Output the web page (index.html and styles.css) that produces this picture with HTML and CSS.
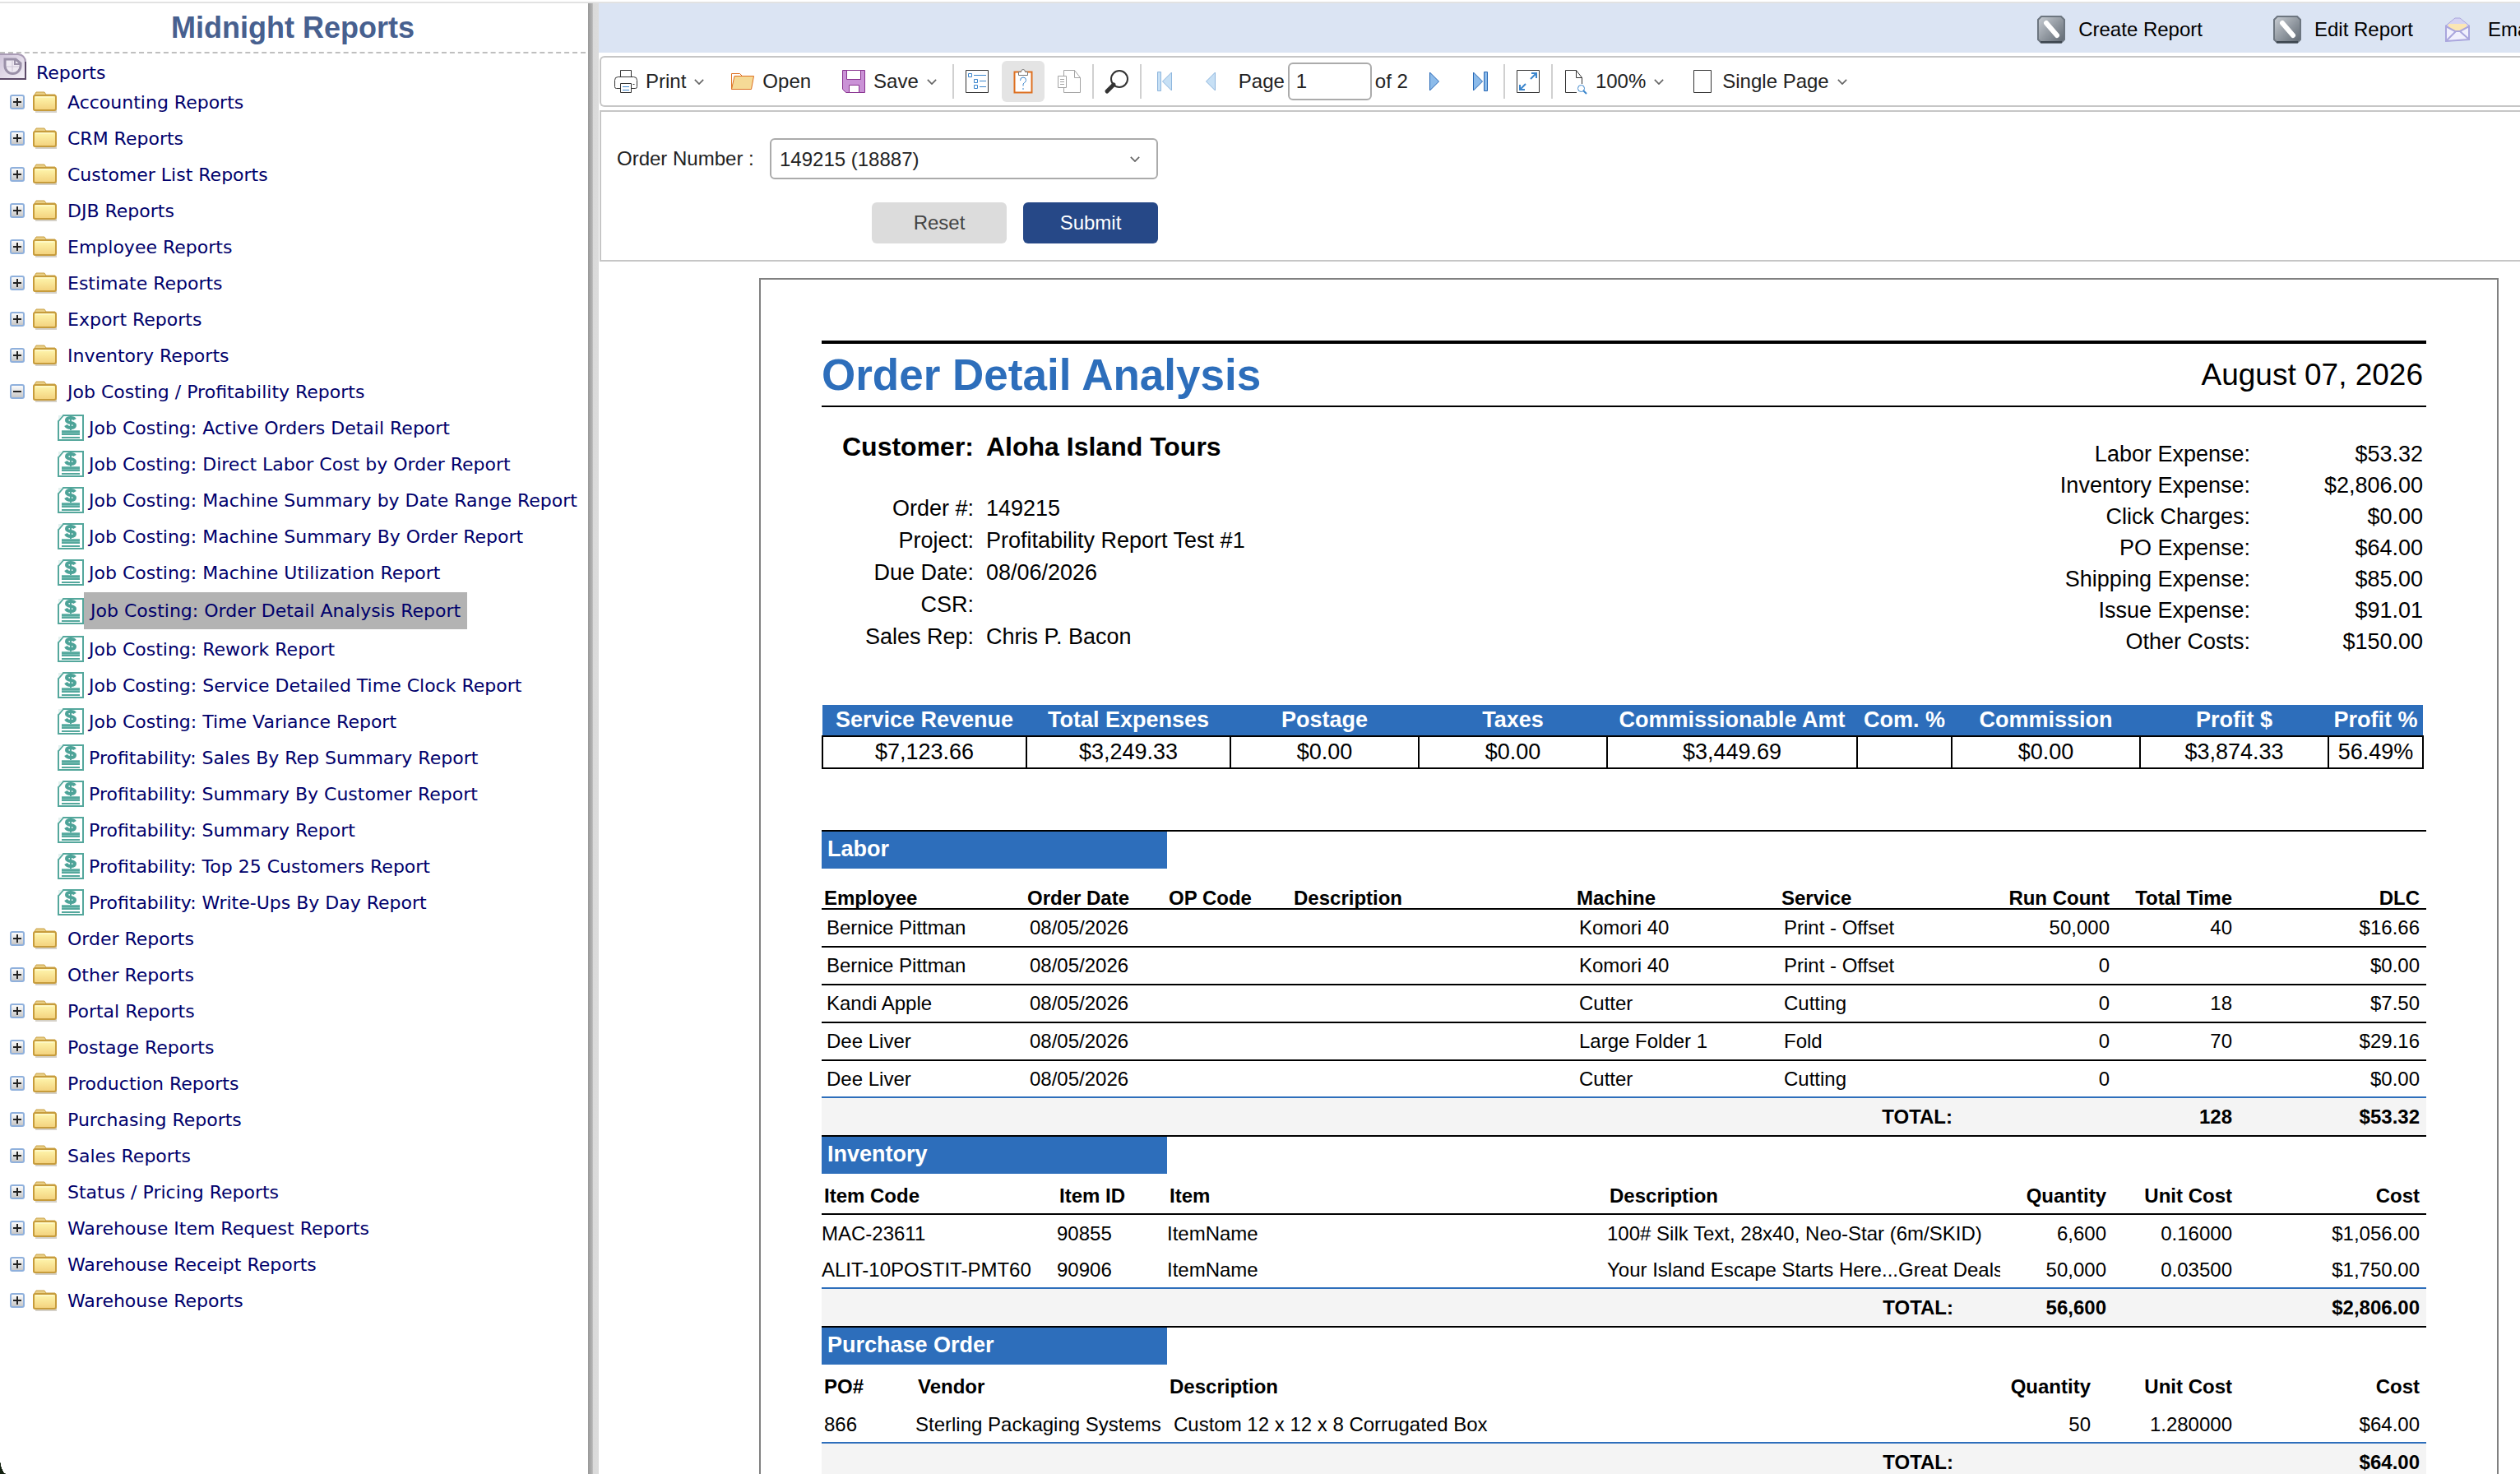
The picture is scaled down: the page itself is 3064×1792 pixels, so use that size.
FILE: index.html
```html
<!DOCTYPE html>
<html lang="en">

<head>
    <meta charset="UTF-8">
    <meta name="viewport" content="width=device-width, initial-scale=1.0">
    <title>Midnight Reports</title>
    <link rel="stylesheet" href="styles.css">
</head>

<body>
    <!-- shared icons -->
    <svg class="sprite" aria-hidden="true">
        <defs>
            <linearGradient id="folderFill" x1="0" y1="0" x2="0" y2="1">
                <stop offset="0" stop-color="#fff8b0" />
                <stop offset="1" stop-color="#f3d17c" />
            </linearGradient>
            <linearGradient id="boxFill" x1="0" y1="0" x2="0" y2="1">
                <stop offset="0" stop-color="#ffffff" />
                <stop offset="1" stop-color="#c4c4c4" />
            </linearGradient>
            <linearGradient id="steel" x1="0" y1="0" x2="1" y2="1">
                <stop offset="0" stop-color="#c9ced4" />
                <stop offset="1" stop-color="#5d6670" />
            </linearGradient>
            <linearGradient id="lilac" x1="0" y1="0" x2="1" y2="1">
                <stop offset="0" stop-color="#cfc4da" />
                <stop offset="1" stop-color="#f4f0f7" />
            </linearGradient>
        </defs>
        <symbol id="plus" viewBox="0 0 18 18">
            <rect x="1" y="1" width="16" height="16" rx="2" fill="url(#boxFill)" stroke="#8fb0dc" stroke-width="2" />
            <path d="M4 9h10M9 4v10" stroke="#222" stroke-width="2" />
        </symbol>
        <symbol id="minus" viewBox="0 0 18 18">
            <rect x="1" y="1" width="16" height="16" rx="2" fill="url(#boxFill)" stroke="#8fb0dc" stroke-width="2" />
            <path d="M4 9h10" stroke="#222" stroke-width="2" />
        </symbol>
        <symbol id="folder" viewBox="0 0 30 28">
            <path d="M3 26h25V7" fill="none" stroke="#b9b2a4" stroke-width="2" opacity=".6" />
            <path d="M1 7l3-5h10l2 3h11v19H1z" fill="#e9cf86" stroke="#c9a145" stroke-width="1" />
            <rect x="1" y="6" width="27" height="18" rx="2" fill="url(#folderFill)" stroke="#c79c3c" stroke-width="2" />
            <path d="M3 8h22" stroke="#fffde0" stroke-width="1" />
        </symbol>
        <symbol id="invoice" viewBox="0 0 32 32">
            <path d="M7 1h24v30H1V8z" fill="#fff" stroke="#54a79c" stroke-width="2" />
            <path d="M1 1h5L1 7z" fill="#e2f1ef" />
            <path d="M21 6c-1-2-3-2-5-2-3 0-5 1-5 3 0 4 10 2 10 6 0 2-2 3-5 3s-5-1-6-3" fill="none" stroke="#4da398" stroke-width="4" />
            <path d="M16 1v18" stroke="#4da398" stroke-width="2" />
            <path d="M5 19h22v5H5z" fill="#7dc0b7" />
            <path d="M5 21h22M5 24h22M5 28h22" stroke="#55a89d" stroke-width="2" />
        </symbol>
        <symbol id="edit" viewBox="0 0 34 34">
            <path d="M5 1h24l4 4v24l-4 4H5l-4-4V5z" fill="url(#steel)" stroke="#6d7680" stroke-width="2" />
            <path d="M11 9l13 15" stroke="#fff" stroke-width="6" stroke-linecap="round" />
            <path d="M4 32h26" stroke="#3d464f" stroke-width="2" />
        </symbol>
        <symbol id="down" viewBox="0 0 14 8">
            <path d="M1 1l6 6 6-6" fill="none" stroke="#666" stroke-width="2" />
        </symbol>
    </svg>

    <div class="app">
        <aside class="sidebar">
            <h1>Midnight Reports</h1>
            <nav class="tree">
                <a class="root" href="#">
                    <svg width="32" height="32" viewBox="0 0 32 32">
                        <path d="M0 1h22q9 1 9 10v20H0" fill="url(#lilac)" stroke="#a99bb5" stroke-width="2" />
                        <path d="M0 31h31V10" fill="none" stroke="#5c4a68" stroke-width="2" />
                        <path d="M6 7v8a9 9 0 0 0 19 0v-3l-6-5z" fill="#efeaf3" stroke="#9a90a8" stroke-width="3" />
                        <path d="M18 7v6h7" fill="none" stroke="#9a90a8" stroke-width="2" />
                        <path d="M15 9v13M8 16h15" stroke="#cdc4d6" stroke-width="1" />
                    </svg>
                    <span>Reports</span>
                </a>
                <ul>
                    <li><a href="#"><svg class="box"><use href="#plus" /></svg><svg class="folder"><use href="#folder" /></svg>Accounting Reports</a></li>
                    <li><a href="#"><svg class="box"><use href="#plus" /></svg><svg class="folder"><use href="#folder" /></svg>CRM Reports</a></li>
                    <li><a href="#"><svg class="box"><use href="#plus" /></svg><svg class="folder"><use href="#folder" /></svg>Customer List Reports</a></li>
                    <li><a href="#"><svg class="box"><use href="#plus" /></svg><svg class="folder"><use href="#folder" /></svg>DJB Reports</a></li>
                    <li><a href="#"><svg class="box"><use href="#plus" /></svg><svg class="folder"><use href="#folder" /></svg>Employee Reports</a></li>
                    <li><a href="#"><svg class="box"><use href="#plus" /></svg><svg class="folder"><use href="#folder" /></svg>Estimate Reports</a></li>
                    <li><a href="#"><svg class="box"><use href="#plus" /></svg><svg class="folder"><use href="#folder" /></svg>Export Reports</a></li>
                    <li><a href="#"><svg class="box"><use href="#plus" /></svg><svg class="folder"><use href="#folder" /></svg>Inventory Reports</a></li>
                    <li>
                        <a href="#"><svg class="box"><use href="#minus" /></svg><svg class="folder"><use href="#folder" /></svg>Job Costing / Profitability Reports</a>
                        <ul class="children">
                            <li><a href="#"><svg><use href="#invoice" /></svg><span>Job Costing: Active Orders Detail Report</span></a></li>
                            <li><a href="#"><svg><use href="#invoice" /></svg><span>Job Costing: Direct Labor Cost by Order Report</span></a></li>
                            <li><a href="#"><svg><use href="#invoice" /></svg><span>Job Costing: Machine Summary by Date Range Report</span></a></li>
                            <li><a href="#"><svg><use href="#invoice" /></svg><span>Job Costing: Machine Summary By Order Report</span></a></li>
                            <li><a href="#"><svg><use href="#invoice" /></svg><span>Job Costing: Machine Utilization Report</span></a></li>
                            <li><a href="#" class="selected"><svg><use href="#invoice" /></svg><span>Job Costing: Order Detail Analysis Report</span></a></li>
                            <li><a href="#"><svg><use href="#invoice" /></svg><span>Job Costing: Rework Report</span></a></li>
                            <li><a href="#"><svg><use href="#invoice" /></svg><span>Job Costing: Service Detailed Time Clock Report</span></a></li>
                            <li><a href="#"><svg><use href="#invoice" /></svg><span>Job Costing: Time Variance Report</span></a></li>
                            <li><a href="#"><svg><use href="#invoice" /></svg><span>Profitability: Sales By Rep Summary Report</span></a></li>
                            <li><a href="#"><svg><use href="#invoice" /></svg><span>Profitability: Summary By Customer Report</span></a></li>
                            <li><a href="#"><svg><use href="#invoice" /></svg><span>Profitability: Summary Report</span></a></li>
                            <li><a href="#"><svg><use href="#invoice" /></svg><span>Profitability: Top 25 Customers Report</span></a></li>
                            <li><a href="#"><svg><use href="#invoice" /></svg><span>Profitability: Write-Ups By Day Report</span></a></li>
                        </ul>
                    </li>
                    <li><a href="#"><svg class="box"><use href="#plus" /></svg><svg class="folder"><use href="#folder" /></svg>Order Reports</a></li>
                    <li><a href="#"><svg class="box"><use href="#plus" /></svg><svg class="folder"><use href="#folder" /></svg>Other Reports</a></li>
                    <li><a href="#"><svg class="box"><use href="#plus" /></svg><svg class="folder"><use href="#folder" /></svg>Portal Reports</a></li>
                    <li><a href="#"><svg class="box"><use href="#plus" /></svg><svg class="folder"><use href="#folder" /></svg>Postage Reports</a></li>
                    <li><a href="#"><svg class="box"><use href="#plus" /></svg><svg class="folder"><use href="#folder" /></svg>Production Reports</a></li>
                    <li><a href="#"><svg class="box"><use href="#plus" /></svg><svg class="folder"><use href="#folder" /></svg>Purchasing Reports</a></li>
                    <li><a href="#"><svg class="box"><use href="#plus" /></svg><svg class="folder"><use href="#folder" /></svg>Sales Reports</a></li>
                    <li><a href="#"><svg class="box"><use href="#plus" /></svg><svg class="folder"><use href="#folder" /></svg>Status / Pricing Reports</a></li>
                    <li><a href="#"><svg class="box"><use href="#plus" /></svg><svg class="folder"><use href="#folder" /></svg>Warehouse Item Request Reports</a></li>
                    <li><a href="#"><svg class="box"><use href="#plus" /></svg><svg class="folder"><use href="#folder" /></svg>Warehouse Receipt Reports</a></li>
                    <li><a href="#"><svg class="box"><use href="#plus" /></svg><svg class="folder"><use href="#folder" /></svg>Warehouse Reports</a></li>
                </ul>
            </nav>
        </aside>
        <div class="splitter"></div>

        <main class="main">
            <header class="actions">
                <a class="create" href="#"><svg width="34" height="34"><use href="#edit" /></svg>Create Report</a>
                <a class="edit" href="#"><svg width="34" height="34"><use href="#edit" /></svg>Edit Report</a>
                <a class="email" href="#">
                    <svg width="30" height="30" viewBox="0 0 30 30">
                        <path d="M1 10L12 1h6l11 9v17L1 29z" fill="#d5d3f3" stroke="#aaa6dd" stroke-width="1" />
                        <path d="M4 8h22v7l-7 4h-8l-7-4z" fill="#fbe6b4" />
                        <path d="M1 11l11 6h6l11-6v16L1 29z" fill="#f1f0fd" stroke="#aaa6dd" stroke-width="2" />
                        <path d="M2 28l11-11h5l10 9" fill="none" stroke="#aaa6dd" stroke-width="2" />
                    </svg>
                    Email
                </a>
            </header>

            <div class="toolbar">
                <button class="tool" type="button">
                    <svg width="28" height="28" viewBox="0 0 28 28" fill="none" stroke="#333" stroke-width="1">
                        <path d="M7.500 8.500v-8h13v8M7.500 22.500h-5q-2 0-2-2v-8q0-4 4-4h19q4 0 4 4v8q0 2-2 2h-5" />
                        <path d="M7.500 16.500h13v11h-13z" fill="#fff" />
                        <path d="M10 20.500h8M10 24.500h8" stroke="#3c86cd" />
                        <path d="M23.500 17v1" stroke-width="2" />
                    </svg>
                    Print
                    <svg class="down"><use href="#down" /></svg>
                </button>
                <button class="tool open" type="button">
                    <svg width="28" height="28" viewBox="0 0 28 28" stroke="#dd7021" stroke-width="1">
                        <path d="M.5 23.500v-19h10l3 3h11v3" fill="#fff" />
                        <path d="M4 7.500h23.500l-3 16H.5z" fill="#f5da96" />
                    </svg>
                    Open
                </button>
                <button class="tool" type="button">
                    <svg width="28" height="28" viewBox="0 0 28 28" stroke="#88328f" stroke-width="1">
                        <path d="M.5.5h27v27h-23l-4-4z" fill="#ca92d6" />
                        <path d="M5.500.5h17v11h-17zM8.500 18.500h12v9h-12z" fill="#fff" />
                    </svg>
                    Save
                    <svg class="down"><use href="#down" /></svg>
                </button>
                <span class="sep"></span>
                <button class="tool" type="button" aria-label="Bookmarks">
                    <svg width="28" height="28" viewBox="0 0 28 28" fill="none" stroke="#3c86cd">
                        <path d="M.5.5h27v27H.5z" fill="#fff" stroke="#333" />
                        <path d="M3.500 4.500h4v4h-4zM10.500 11.500h4v4h-4zM10.500 18.500h4v4h-4zM10 6.500h15M17 13.500h8M17 20.500h8" />
                    </svg>
                </button>
                <button class="tool active" type="button" aria-label="Parameters">
                    <svg width="28" height="28" viewBox="0 0 28 28">
                        <path d="M3.500 2.500h21v25h-21z" fill="#fff" stroke="#dd7021" stroke-width="2" />
                        <path d="M8.500 6.500v-4h3q0-3 2.500-3t2.500 3h3v4z" fill="#fff" stroke="#777" />
                        <path d="M10.500 13q0-4 3.500-4t3.500 3.500q0 2-2 3t-1.500 4M14 22v2" fill="none" stroke="#3c86cd" />
                    </svg>
                </button>
                <button class="tool" type="button" aria-label="Copy">
                    <svg width="28" height="28" viewBox="0 0 28 28" fill="none" stroke="#a3a3a3">
                        <path d="M7.500 7V.5h13l7 9v18h-20v-6M20.500.5v9h7" />
                        <path d="M.5 7.500h10v14H.5z" fill="#fff" />
                        <path d="M3 11.500h5M3 14.500h5M3 17.500h5" />
                    </svg>
                </button>
                <span class="sep"></span>
                <button class="tool" type="button" aria-label="Find">
                    <svg width="28" height="28" viewBox="0 0 28 28" fill="none" stroke="#333">
                        <circle cx="17" cy="11" r="10" stroke-width="2" />
                        <path d="M10 18l-8 8" stroke-width="5" stroke-linecap="round" />
                    </svg>
                </button>
                <span class="sep"></span>
                <button class="tool" type="button" aria-label="First page">
                    <svg width="28" height="28" viewBox="0 0 28 28" fill="#c7e0f5" stroke="#8db5dd">
                        <path d="M5.500 2.500h4v23h-4zM22.500 3v22l-11-11z" />
                    </svg>
                </button>
                <button class="tool" type="button" aria-label="Previous page">
                    <svg width="28" height="28" viewBox="0 0 28 28" fill="#c7e0f5" stroke="#8db5dd">
                        <path d="M19.500 3v22l-11-11z" />
                    </svg>
                </button>
                <label class="page-label" for="page">Page</label>
                <input id="page" class="page-input" type="text" value="1">
                <span class="page-count">of 2</span>
                <button class="tool" type="button" aria-label="Next page">
                    <svg width="28" height="28" viewBox="0 0 28 28" fill="#8cbbea" stroke="#2566b4">
                        <path d="M8.500 3v22l11-11z" />
                    </svg>
                </button>
                <button class="tool" type="button" aria-label="Last page">
                    <svg width="28" height="28" viewBox="0 0 28 28" fill="#8cbbea" stroke="#2566b4">
                        <path d="M18.500 2.500h4v23h-4zM5.500 3v22l11-11z" />
                    </svg>
                </button>
                <span class="sep"></span>
                <button class="tool" type="button" aria-label="Full screen">
                    <svg width="28" height="28" viewBox="0 0 28 28" fill="none" stroke="#3c86cd" stroke-width="2">
                        <path d="M.5.5h27v27H.5z" fill="#fff" stroke="#333" stroke-width="1" />
                        <path d="M17 11l7-7M18 4h6v6M11 17l-7 7M4 18v6h6" />
                    </svg>
                </button>
                <span class="sep"></span>
                <button class="tool" type="button">
                    <svg width="28" height="28" viewBox="0 0 28 28" fill="none" stroke="#333">
                        <path d="M15 27.500H1.500V.5h13l7 9V17M14.500.5v9h7" />
                        <circle cx="20.500" cy="22.500" r="4" stroke="#3c86cd" />
                        <path d="M23 25l4 4" stroke="#3c86cd" stroke-width="2" />
                    </svg>
                    100%
                    <svg class="down"><use href="#down" /></svg>
                </button>
                <button class="tool" type="button">
                    <svg width="28" height="28" viewBox="0 0 28 28" fill="#fff" stroke="#333">
                        <path d="M3.500.5h21v27h-21z" />
                    </svg>
                    Single Page
                    <svg class="down"><use href="#down" /></svg>
                </button>
            </div>

            <form class="params">
                <div class="field">
                    <label for="order">Order Number :</label>
                    <div class="select">
                        <select id="order">
                            <option>149215 (18887)</option>
                        </select>
                        <svg class="down"><use href="#down" /></svg>
                    </div>
                </div>
                <div class="buttons">
                    <button class="btn" type="reset">Reset</button>
                    <button class="btn primary" type="button">Submit</button>
                </div>
            </form>

            <article class="sheet">
                <div class="title">
                    <h2>Order Detail Analysis</h2>
                    <span>August 07, 2026</span>
                </div>

                <div class="info">
                    <dl class="customer">
                        <dt class="big">Customer:</dt>
                        <dd class="big">Aloha Island Tours</dd>
                        <dt>Order #:</dt>
                        <dd>149215</dd>
                        <dt>Project:</dt>
                        <dd>Profitability Report Test #1</dd>
                        <dt>Due Date:</dt>
                        <dd>08/06/2026</dd>
                        <dt>CSR:</dt>
                        <dd></dd>
                        <dt>Sales Rep:</dt>
                        <dd>Chris P. Bacon</dd>
                    </dl>
                    <dl class="expenses">
                        <dt>Labor Expense:</dt>
                        <dd>$53.32</dd>
                        <dt>Inventory Expense:</dt>
                        <dd>$2,806.00</dd>
                        <dt>Click Charges:</dt>
                        <dd>$0.00</dd>
                        <dt>PO Expense:</dt>
                        <dd>$64.00</dd>
                        <dt>Shipping Expense:</dt>
                        <dd>$85.00</dd>
                        <dt>Issue Expense:</dt>
                        <dd>$91.01</dd>
                        <dt>Other Costs:</dt>
                        <dd>$150.00</dd>
                    </dl>
                </div>

                <table class="summary">
                    <colgroup>
                        <col class="w-248"><col class="w-248"><col class="w-229"><col class="w-229"><col>
                        <col class="w-115"><col class="w-229"><col class="w-229"><col class="w-115">
                    </colgroup>
                    <thead>
                        <tr>
                            <th>Service Revenue</th>
                            <th>Total Expenses</th>
                            <th>Postage</th>
                            <th>Taxes</th>
                            <th>Commissionable Amt</th>
                            <th>Com. %</th>
                            <th>Commission</th>
                            <th>Profit $</th>
                            <th>Profit %</th>
                        </tr>
                    </thead>
                    <tbody>
                        <tr>
                            <td>$7,123.66</td>
                            <td>$3,249.33</td>
                            <td>$0.00</td>
                            <td>$0.00</td>
                            <td>$3,449.69</td>
                            <td></td>
                            <td>$0.00</td>
                            <td>$3,874.33</td>
                            <td>56.49%</td>
                        </tr>
                    </tbody>
                </table>

                <section class="group">
                    <h3>Labor</h3>
                    <table class="lines labor">
                        <colgroup>
                            <col class="w-247"><col class="w-172"><col class="w-152"><col><col class="w-249">
                            <col class="w-214"><col class="w-191"><col class="w-149"><col class="w-233">
                        </colgroup>
                        <thead>
                            <tr>
                                <th>Employee</th>
                                <th>Order Date</th>
                                <th>OP Code</th>
                                <th>Description</th>
                                <th>Machine</th>
                                <th>Service</th>
                                <th class="num">Run Count</th>
                                <th class="num">Total Time</th>
                                <th class="num">DLC</th>
                            </tr>
                        </thead>
                        <tbody>
                            <tr><td>Bernice Pittman</td><td>08/05/2026</td><td></td><td></td><td>Komori 40</td><td>Print - Offset</td><td class="num">50,000</td><td class="num">40</td><td class="num">$16.66</td></tr>
                            <tr><td>Bernice Pittman</td><td>08/05/2026</td><td></td><td></td><td>Komori 40</td><td>Print - Offset</td><td class="num">0</td><td></td><td class="num">$0.00</td></tr>
                            <tr><td>Kandi Apple</td><td>08/05/2026</td><td></td><td></td><td>Cutter</td><td>Cutting</td><td class="num">0</td><td class="num">18</td><td class="num">$7.50</td></tr>
                            <tr><td>Dee Liver</td><td>08/05/2026</td><td></td><td></td><td>Large Folder 1</td><td>Fold</td><td class="num">0</td><td class="num">70</td><td class="num">$29.16</td></tr>
                            <tr><td>Dee Liver</td><td>08/05/2026</td><td></td><td></td><td>Cutter</td><td>Cutting</td><td class="num">0</td><td></td><td class="num">$0.00</td></tr>
                        </tbody>
                        <tfoot>
                            <tr><td class="num" colspan="6">TOTAL:</td><td></td><td class="num">128</td><td class="num">$53.32</td></tr>
                        </tfoot>
                    </table>
                </section>

                <section class="group">
                    <h3>Inventory</h3>
                    <table class="lines inventory">
                        <colgroup>
                            <col class="w-286"><col class="w-134"><col><col class="w-424"><col class="w-54">
                            <col class="w-132"><col class="w-153"><col class="w-233">
                        </colgroup>
                        <thead>
                            <tr>
                                <th>Item Code</th>
                                <th>Item ID</th>
                                <th>Item</th>
                                <th colspan="2">Description</th>
                                <th class="num">Quantity</th>
                                <th class="num">Unit Cost</th>
                                <th class="num">Cost</th>
                            </tr>
                        </thead>
                        <tbody>
                            <tr><td>MAC-23611</td><td>90855</td><td>ItemName</td><td colspan="2">100# Silk Text, 28x40, Neo-Star (6m/SKID)</td><td class="num">6,600</td><td class="num">0.16000</td><td class="num">$1,056.00</td></tr>
                            <tr><td>ALIT-10POSTIT-PMT60</td><td>90906</td><td>ItemName</td><td colspan="2">Your Island Escape Starts Here...Great Deals</td><td class="num">50,000</td><td class="num">0.03500</td><td class="num">$1,750.00</td></tr>
                        </tbody>
                        <tfoot>
                            <tr><td class="num" colspan="4">TOTAL:</td><td></td><td class="num">56,600</td><td></td><td class="num">$2,806.00</td></tr>
                        </tfoot>
                    </table>
                </section>

                <section class="group">
                    <h3>Purchase Order</h3>
                    <table class="lines purchase">
                        <colgroup>
                            <col class="w-114"><col class="w-306"><col><col class="w-167"><col class="w-172"><col class="w-233">
                        </colgroup>
                        <thead>
                            <tr>
                                <th>PO#</th>
                                <th>Vendor</th>
                                <th>Description</th>
                                <th class="num">Quantity</th>
                                <th class="num">Unit Cost</th>
                                <th class="num">Cost</th>
                            </tr>
                        </thead>
                        <tbody>
                            <tr><td>866</td><td>Sterling Packaging Systems</td><td class="desc">Custom 12 x 12 x 8 Corrugated Box</td><td class="num">50</td><td class="num">1.280000</td><td class="num">$64.00</td></tr>
                        </tbody>
                        <tfoot>
                            <tr><td class="num" colspan="3">TOTAL:</td><td></td><td></td><td class="num">$64.00</td></tr>
                        </tfoot>
                    </table>
                </section>
            </article>
        </main>
    </div>
</body>

</html>
```

FILE: styles.css
```css
* {
    margin: 0;
    padding: 0;
    box-sizing: border-box;
}

body {
    height: 100vh;
    overflow: hidden;
    padding-top: 2px;
    background: #fff;
    color: #000;
    font-family: Arial, "Liberation Sans", sans-serif;
    font-size: 24px;
}

/* rounded window corner */
body::after {
    content: "";
    position: absolute;
    left: 0;
    bottom: 0;
    width: 8px;
    height: 20px;
    background: radial-gradient(ellipse 8px 20px at 100% 0, #fff 98%, #12200f);
}

a {
    color: inherit;
    text-decoration: none;
}

ul {
    list-style: none;
}

svg {
    flex: none;
    overflow: visible;
}

button,
input,
select {
    font: inherit;
    color: inherit;
}

.sprite {
    position: absolute;
    width: 0;
    height: 0;
}

.app {
    display: flex;
    height: 100%;
    border-top: 2px solid #e2e2e2;
}

/* report tree */
.sidebar {
    flex: none;
    width: 715px;
    overflow: hidden;
}

.sidebar h1 {
    margin-right: 3px;
    height: 61px;
    line-height: 59px;
    border-bottom: 2px dashed #bfbfbf;
    color: #47608f;
    font-size: 36px;
    text-align: center;
}

.tree {
    color: #00006b;
    font-family: Verdana, "DejaVu Sans", sans-serif;
    font-size: 22px;
    white-space: nowrap;
}

.tree .root {
    display: flex;
    gap: 12px;
    height: 37px;
}

.tree .root span {
    line-height: 48px;
}

.tree li a {
    display: flex;
    align-items: center;
    height: 44px;
    padding-left: 12px;
}

.tree .box {
    width: 18px;
    height: 18px;
    margin-right: 10px;
}

.tree .folder {
    width: 30px;
    height: 28px;
    margin-right: 12px;
}

.tree .children a {
    padding-left: 70px;
}

.children svg {
    width: 32px;
    height: 32px;
}

.children span {
    padding-left: 6px;
}

.tree .children .selected {
    height: 49px;
}

.selected span {
    padding: 0 8px;
    line-height: 45px;
    background: #b3b3b3;
}

.splitter {
    flex: none;
    width: 13px;
    background: linear-gradient(to right, #989898, #b4b4b4 40%, #dadada 50%, #dcdcdc);
}

/* right side */
.main {
    flex: 1;
    min-width: 0;
    overflow: hidden;
}

.actions {
    display: flex;
    justify-content: flex-end;
    height: 60px;
    padding-top: 4px;
    background: #dbe4f3;
    white-space: nowrap;
}

.actions a {
    display: flex;
    align-items: center;
    gap: 16px;
}

.actions .create {
    margin-right: 86px;
}

.actions .edit {
    margin-right: 39px;
}

.actions .email {
    gap: 22px;
    width: 91px;
    overflow: hidden;
}

.toolbar {
    display: flex;
    align-items: center;
    height: 62px;
    margin: 4px 0 4px 1px;
    padding-left: 2px;
    border: 2px solid #c6c6c6;
    border-right: none;
    border-radius: 6px 0 0 6px;
    color: #222;
    white-space: nowrap;
}

.tool {
    display: flex;
    align-items: center;
    flex: none;
    gap: 10px;
    height: 50px;
    margin: 0 2px;
    padding: 0 12px;
    border: none;
    border-radius: 6px;
    background: none;
}

.tool.open {
    padding-right: 22px;
}

.tool.active {
    background: #e4e4e4;
}

.down {
    width: 12px;
    height: 7px;
}

.tool .down {
    margin-right: 5px;
}

.sep {
    flex: none;
    width: 2px;
    height: 42px;
    background: #d0d0d0;
}

.page-label {
    margin: 0 4px 0 6px;
}

.page-input {
    width: 102px;
    height: 46px;
    padding-left: 8px;
    border: 2px solid #ababab;
    border-radius: 6px;
}

.page-count {
    margin: 0 4px;
}

.params {
    margin-left: 1px;
    padding: 32px 19px 20px;
    border: 2px solid #c6c6c6;
    border-right: none;
    color: #222;
}

.field,
.buttons {
    display: flex;
    align-items: center;
    justify-content: space-between;
    width: 658px;
}

.select {
    position: relative;
}

.select select {
    width: 472px;
    height: 50px;
    padding-left: 10px;
    border: 2px solid #ababab;
    border-radius: 6px;
    background: #fff;
    appearance: none;
}

.select .down {
    position: absolute;
    top: 22px;
    right: 22px;
}

.buttons {
    justify-content: flex-end;
    gap: 20px;
    margin-top: 28px;
}

.btn {
    width: 164px;
    height: 50px;
    border: none;
    border-radius: 6px;
    background: #dcdcdc;
    color: #444;
}

.btn.primary {
    background: #264887;
    color: #fff;
}

/* report page */
.sheet {
    margin: 20px 26px 0 195px;
    padding: 74px 86px 60px 74px;
    border: 2px solid #808080;
    white-space: nowrap;
}

.title {
    display: flex;
    align-items: center;
    justify-content: space-between;
    height: 81px;
    padding-right: 4px;
    border-top: 4px solid #000;
    border-bottom: 2px solid #000;
}

.title h2 {
    color: #2d6ebb;
    font-size: 53px;
}

.title span {
    font-size: 37px;
}

.info {
    display: flex;
    justify-content: space-between;
    height: 362px;
    padding-right: 4px;
    font-size: 27px;
    line-height: 38px;
}

.info dl {
    display: grid;
    align-content: start;
}

.info dt {
    text-align: right;
}

.customer {
    grid-template-columns: 185px auto;
    grid-template-rows: 75px;
    grid-auto-rows: 39px;
    column-gap: 15px;
    padding-top: 29px;
}

.customer .big {
    font-size: 32px;
    font-weight: bold;
}

.expenses {
    grid-template-columns: auto 210px;
    grid-auto-rows: 38px;
    padding-top: 38px;
}

.expenses dd {
    text-align: right;
}

.summary,
.lines {
    width: 100%;
    table-layout: fixed;
    border-collapse: collapse;
}

.summary {
    width: calc(100% - 3px);
    margin-bottom: 74px;
    font-size: 27px;
    text-align: center;
}

.summary th {
    height: 38px;
    background: #2d6ebb;
    color: #fff;
}

.summary td {
    height: 39px;
    border: 2px solid #000;
}

.group {
    border-top: 2px solid #000;
}

.group h3 {
    width: 420px;
    height: 45px;
    padding-left: 7px;
    background: #2d6ebb;
    color: #fff;
    font-size: 27px;
    line-height: 43px;
}

.lines th,
.lines td {
    overflow: hidden;
    text-align: left;
}

.lines th {
    height: 49px;
    padding: 5px 0 0 3px;
}

.lines .num {
    padding-right: 3px;
    text-align: right;
}

.lines .num:last-child {
    padding-right: 8px;
}

.lines td {
    height: 45px;
}

.lines tbody td {
    padding-top: 2px;
}

.lines tfoot td {
    height: 46px;
    border-top: 2px solid #2d6ebb;
    background: #f4f4f4;
    font-weight: bold;
}

.labor th {
    line-height: 24px;
    vertical-align: bottom;
}

.labor tbody td {
    height: 46px;
    padding-top: 0;
    padding-left: 6px;
    border-top: 2px solid #000;
}

.labor tbody tr:last-child td {
    height: 45px;
}

.inventory thead {
    border-bottom: 2px solid #000;
}

.purchase tbody td {
    height: 46px;
}

.purchase td:first-child {
    padding-left: 3px;
}

.purchase .desc {
    padding-left: 8px;
}

/* column widths */
.w-54 { width: 54px; }
.w-114 { width: 114px; }
.w-115 { width: 115px; }
.w-132 { width: 132px; }
.w-134 { width: 134px; }
.w-149 { width: 149px; }
.w-152 { width: 152px; }
.w-153 { width: 153px; }
.w-167 { width: 167px; }
.w-172 { width: 172px; }
.w-191 { width: 191px; }
.w-214 { width: 214px; }
.w-229 { width: 229px; }
.w-233 { width: 233px; }
.w-247 { width: 247px; }
.w-248 { width: 248px; }
.w-249 { width: 249px; }
.w-286 { width: 286px; }
.w-306 { width: 306px; }
.w-424 { width: 424px; }
```
